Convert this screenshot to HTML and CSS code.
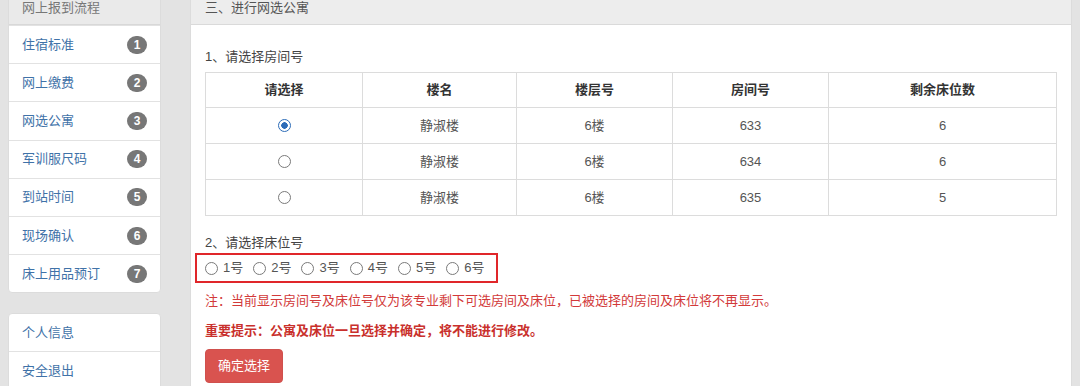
FILE: index.html
```html
<!DOCTYPE html>
<html lang="zh-CN">
<head>
  <meta charset="UTF-8">
  <title>网上报到 - 网选公寓</title>
  <link rel="stylesheet" href="styles.css">
</head>
<body>
<div class="layout">
  <aside class="side">
    <div class="panel">
      <div class="panel-head">网上报到流程</div>
      <a class="nav-item" href="#">住宿标准<span class="badge">1</span></a>
      <a class="nav-item" href="#">网上缴费<span class="badge">2</span></a>
      <a class="nav-item" href="#">网选公寓<span class="badge">3</span></a>
      <a class="nav-item" href="#">军训服尺码<span class="badge">4</span></a>
      <a class="nav-item" href="#">到站时间<span class="badge">5</span></a>
      <a class="nav-item" href="#">现场确认<span class="badge">6</span></a>
      <a class="nav-item" href="#">床上用品预订<span class="badge">7</span></a>
    </div>
    <div class="panel">
      <a class="nav-item first" href="#">个人信息</a>
      <a class="nav-item" href="#">安全退出</a>
    </div>
  </aside>

  <main class="main">
    <div class="main-head">三、进行网选公寓</div>
    <div class="main-body">
      <p class="step">1、请选择房间号</p>
      <table class="rooms">
        <colgroup>
          <col style="width:157px">
          <col style="width:154px">
          <col style="width:156px">
          <col style="width:156px">
          <col>
        </colgroup>
        <thead>
          <tr><th>请选择</th><th>楼名</th><th>楼层号</th><th>房间号</th><th>剩余床位数</th></tr>
        </thead>
        <tbody>
          <tr><td><input class="radio" type="radio" name="room" checked></td><td>静淑楼</td><td>6楼</td><td>633</td><td>6</td></tr>
          <tr><td><input class="radio" type="radio" name="room"></td><td>静淑楼</td><td>6楼</td><td>634</td><td>6</td></tr>
          <tr><td><input class="radio" type="radio" name="room"></td><td>静淑楼</td><td>6楼</td><td>635</td><td>5</td></tr>
        </tbody>
      </table>

      <p class="step step-2">2、请选择床位号</p>
      <div class="beds">
        <label class="bed"><input class="radio" type="radio" name="bed">1号</label>
        <label class="bed"><input class="radio" type="radio" name="bed">2号</label>
        <label class="bed"><input class="radio" type="radio" name="bed">3号</label>
        <label class="bed"><input class="radio" type="radio" name="bed">4号</label>
        <label class="bed"><input class="radio" type="radio" name="bed">5号</label>
        <label class="bed"><input class="radio" type="radio" name="bed">6号</label>
      </div>

      <p class="note">注：当前显示房间号及床位号仅为该专业剩下可选房间及床位，已被选择的房间及床位将不再显示。</p>
      <p class="note strong">重要提示：公寓及床位一旦选择并确定，将不能进行修改。</p>
      <button class="btn-danger" type="button">确定选择</button>
    </div>
  </main>
</div>
</body>
</html>
```

FILE: styles.css
```css
body {
  margin: 0;
  background: #e3e3e3;
  font: 13px/18px "Liberation Sans", "Noto Sans CJK SC", sans-serif;
  color: #555;
}

.layout {
  display: flex;
  align-items: flex-start;
  margin-top: -13px;
  padding: 0 8px;
  gap: 29px;
}

/* left menu */
.side {
  width: 153px;
  flex: none;
  display: flex;
  flex-direction: column;
  gap: 20px;
}

.panel {
  background: #fff;
  border: 1px solid #dcdcdc;
  border-radius: 4px;
  overflow: hidden;
}

.panel-head {
  height: 37px;
  box-sizing: border-box;
  padding: 11px 13px 0;
  background: #eaeaea;
  border-bottom: 1px solid #d8d8d8;
  color: #777;
}

.nav-item {
  display: flex;
  align-items: center;
  justify-content: space-between;
  height: 38.2px;
  box-sizing: border-box;
  padding: 0 13px;
  border-top: 1px solid #e2e2e2;
  color: #3f72a8;
  text-decoration: none;
}

.nav-item.first {
  border-top: 0;
  height: 37px;
}

.badge {
  min-width: 20px;
  height: 18px;
  box-sizing: border-box;
  border-radius: 9px;
  background: #777;
  color: #fff;
  font-size: 12px;
  font-weight: bold;
  line-height: 18px;
  text-align: center;
}

/* content */
.main {
  flex: 1;
  background: #fff;
  border: 1px solid #dcdcdc;
  border-top: 0;
}

.main-head {
  height: 38px;
  box-sizing: border-box;
  padding: 12px 14px 0;
  background: #ededed;
  border-bottom: 1px solid #dadada;
  color: #555;
}

.main-body {
  padding: 22px 14px 40px;
}

.step {
  margin: 0 0 5px;
  line-height: 20px;
  color: #444;
}

.step-2 {
  margin-top: 17px;
  margin-bottom: 0;
}

.rooms {
  width: 100%;
  border-collapse: collapse;
  table-layout: fixed;
  text-align: center;
}

.rooms th,
.rooms td {
  border: 1px solid #dcdcdc;
  padding: 0;
  vertical-align: middle;
}

.rooms th {
  height: 34px;
  color: #333;
  font-weight: bold;
}

.rooms td {
  height: 35px;
  color: #555;
}

.radio {
  appearance: none;
  width: 13px;
  height: 13px;
  box-sizing: border-box;
  margin: 0;
  border: 1.5px solid #7a7a7a;
  border-radius: 50%;
  background: #fff;
  vertical-align: middle;
}

.radio:checked {
  border-color: #2c6cb8;
  background: radial-gradient(circle, #2c6cb8 0 3px, #fff 3.5px);
}

.rooms .radio {
  margin-top: -1px;
}

.beds {
  display: flex;
  align-items: center;
  gap: 10px;
  width: 291px;
  height: 26px;
  margin-left: -10px;
  padding-left: 8px;
  border: 2px solid #e0262a;
}

.bed {
  display: flex;
  align-items: center;
  gap: 5px;
  color: #555;
}

.note {
  margin: 8px 0 0;
  line-height: 20px;
  color: #d23a3a;
}

.note.strong {
  margin-top: 10px;
  font-weight: bold;
  color: #c9302c;
}

.btn-danger {
  margin-top: 8px;
  height: 34px;
  padding: 0 12px;
  border: 1px solid #d0504d;
  border-radius: 4px;
  background: #d9534f;
  color: #fff;
  font: inherit;
}
```
